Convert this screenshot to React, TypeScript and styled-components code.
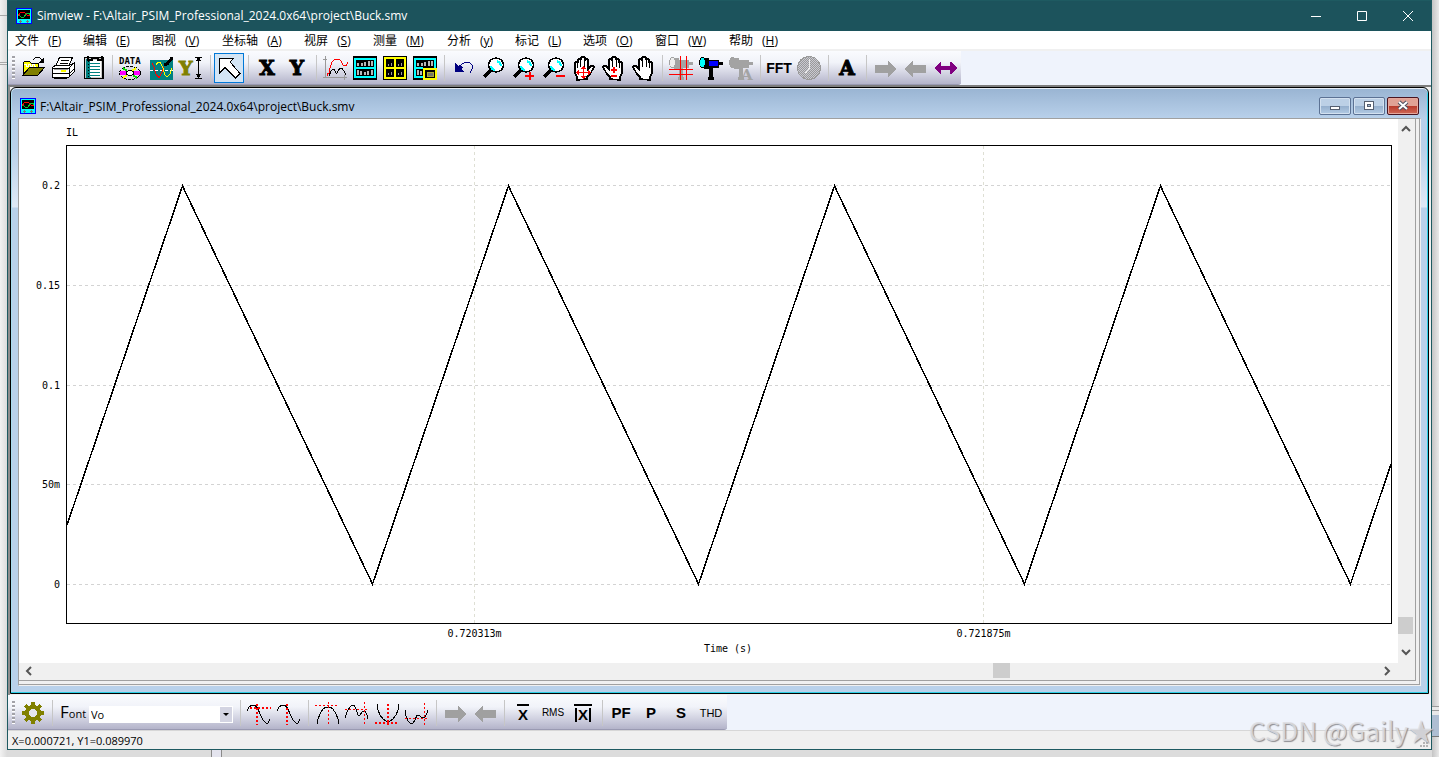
import React from "react";
import styled, { createGlobalStyle } from "styled-components";

const uiFont = `"Open Sans", "Noto Sans CJK SC", sans-serif`;
const monoFont = `"DejaVu Sans Mono", "Liberation Mono", monospace`;

const GlobalStyle = createGlobalStyle`
  * { box-sizing: border-box; }
  body { margin: 0; font-family: ${uiFont}; font-size: 12px; color: #000; }
  button { font: inherit; color: inherit; border: 0; padding: 0; margin: 0; background: none; }
`;

/* ---------- window shell ---------- */

const Desktop = styled.div`
  display: flex;
  min-height: 100vh;
  padding: 0 7px 7px;
  background:
    linear-gradient(90deg, #8a8a8a 0 1px, #e4e4ee 1px 10px, #8a8a8a 10px 11px, transparent 11px) 211px 100% / 12px 7px no-repeat,
    linear-gradient(#9a9a9a 0 1px, #e8e8e8 1px 4px, #9a9a9a 4px 5px, #e8e8e8 5px 9px, #aebed2 9px 30px, #777 30px 31px) 100% 706px / 7px 31px no-repeat,
    linear-gradient(#a8a8a8, #a8a8a8) 0 15px / 7px 1px no-repeat,
    linear-gradient(#a8a8a8 0 1px, #eee 1px 2px, #a8a8a8 2px) 0 62px / 7px 3px no-repeat,
    linear-gradient(90deg, #f2f2f2 0, #dcdcdc 7px, #dcdcdc calc(100% - 7px), #c4c4c4 calc(100% - 7px), #e9e9e9 100%);
`;

const Window = styled.div`
  position: relative;
  flex: 1;
  min-width: 0;
  display: flex;
  flex-direction: column;
  background: #f0f0f0;
  border: 1px solid #1e5a61;
`;

const TitleBar = styled.header`
  display: flex;
  align-items: center;
  height: 30px;
  padding-left: 8px;
  background: #1c535c;
  color: #fff;
`;

const TitleText = styled.h1`
  flex: 1;
  margin: 0 0 0 5px;
  font-size: 12px;
  font-weight: 400;
  line-height: 18px;
  white-space: nowrap;
`;

const CaptionButton = styled.button`
  display: grid;
  place-items: center;
  width: 46px;
  height: 30px;
`;

const MenuBar = styled.nav`
  display: flex;
  height: 20px;
  padding-left: 7px;
  background: #fff;
  border-bottom: 2px solid #f0f0f0;
`;

const MenuItem = styled.button<{ $width: number }>`
  display: flex;
  gap: 9px;
  width: ${(p) => p.$width}px;
  line-height: 20px;
  white-space: nowrap;
`;

/* ---------- toolbars ---------- */

const Dock = styled.div<{ $height: number }>`
  display: flex;
  height: ${(p) => p.$height}px;
  background: #eff3fc;
`;

const Toolbar = styled.div<{ $low?: boolean }>`
  display: flex;
  align-items: center;
  padding: ${(p) => (p.$low ? 2 : 0)}px 1px 0 0;
  border-bottom: 1px solid #9a9ab2;
  border-radius: 0 0 3px 0;
  background: linear-gradient(#fafbfe, #f1f3f9 35%, #d5d6e4 65%, #b4b4ca);
`;

const Grip = styled.div`
  width: 3px;
  height: 24px;
  margin: 0 3px 0 4px;
  background: repeating-linear-gradient(#a2a2a8 0 2px, #fff 2px 3px, transparent 3px 4px);
`;

const Separator = styled.div`
  width: 8px;
  height: 26px;
  background: linear-gradient(90deg, transparent 4px, #c6c6c6 4px 5px, transparent 5px);
`;

const ToolButton = styled.button<{ $active?: boolean }>`
  display: grid;
  place-items: center;
  width: 30px;
  height: 30px;
  border: 1px solid ${(p) => (p.$active ? "#0078d7" : "transparent")};
  background: ${(p) => (p.$active ? "#d3e5f5" : "none")};
`;

const Pixels = styled.svg`
  display: block;
  width: 24px;
  height: 24px;
  overflow: visible;
  shape-rendering: crispEdges;
`;

const Glyph = styled.span<{ $size: number; $light?: boolean }>`
  font-family: "Liberation Sans", sans-serif;
  font-size: ${(p) => p.$size}px;
  font-weight: ${(p) => (p.$light ? 400 : 700)};
  line-height: 24px;
`;

const SlabGlyph = styled.span`
  font: 700 20px/24px "DejaVu Serif", serif;
  -webkit-text-stroke: 1px #000;
`;

const MeanGlyph = styled.span<{ $bars?: boolean }>`
  padding: 0 1px;
  border: solid #000;
  border-width: 2px 0 0;
  font: 700 15px/14px "Liberation Sans", sans-serif;
  & > span {
    display: block;
    margin-top: 2px;
    padding: 0 ${(p) => (p.$bars ? 1 : 0)}px;
    border: solid #000;
    border-width: 0 ${(p) => (p.$bars ? 2 : 0)}px;
  }
`;

const FontLabel = styled.label`
  width: 33px;
  padding-left: 4px;
  font: 11px/24px "Open Sans", sans-serif;
  white-space: nowrap;
  & > span { font-size: 17px; }
`;

const SelectBox = styled.div`
  position: relative;
  width: 144px;
  height: 17px;
  margin: 2px 3px 0 0;
  background: #fff;
  & > svg {
    position: absolute;
    right: 1px;
    top: 1px;
    pointer-events: none;
  }
`;

const FontSelect = styled.select`
  appearance: none;
  display: block;
  width: 100%;
  height: 17px;
  padding: 0 2px;
  border: 0;
  background: transparent;
  font: 11px/17px ${uiFont};
  color: #000;
`;

/* ---------- document window ---------- */

const Client = styled.main`
  flex: 1;
  display: flex;
  min-height: 0;
  padding: 0 2px 1px 0;
  border: solid #8e8e8e;
  border-width: 2px 0 0 2px;
  border-top-color: #7d7d7d;
  background: #f0f0f0;
`;

const DocWindow = styled.section`
  flex: 1;
  min-width: 0;
  display: flex;
  flex-direction: column;
  padding: 0 7px 7px;
  border: 1px solid #000;
  border-radius: 6px 6px 0 0;
  background: linear-gradient(#99b4d2 0, #b8d0ea 30px, #b9d1ea 60px, #dfe9f6 119px, #b9d1ea 120px);
  box-shadow: inset 0 1px #e6eef8, inset -1px -1px #2ccfe6, inset 1px 0 #a8dcee;
`;

const DocTitle = styled.div`
  display: flex;
  align-items: center;
  height: 30px;
  padding: 6px 2px 0;
`;

const DocName = styled.h2`
  flex: 1;
  margin: 2px 0 0 4px;
  font-size: 12px;
  font-weight: 400;
  line-height: 18px;
  white-space: nowrap;
`;

const DocButton = styled.button<{ $close?: boolean }>`
  display: grid;
  place-items: center;
  width: 32px;
  height: 18px;
  margin-left: 2px;
  border: 1px solid ${(p) => (p.$close ? "#4a1420" : "#5c7294")};
  border-radius: 2px;
  box-shadow: inset 0 0 0 1px ${(p) => (p.$close ? "#e5a79c" : "#d3e1f0")};
  background: ${(p) =>
    p.$close
      ? "linear-gradient(#e0a195 0 48%, #b8382a 50%, #cf6a58)"
      : "linear-gradient(#bcd0e6 0 48%, #94afcd 50%, #b3cbe4)"};
`;

const Bevel = styled.div`
  flex: 1;
  display: flex;
  border: 1px solid #a0a0a0;
  border-right-color: #f0f0f0;
  border-bottom-color: #f0f0f0;
  background: #f0f0f0;
`;

const BevelInner = styled.div`
  flex: 1;
  display: flex;
  padding: 0 3px 3px 0;
  border: solid #a0a0a0;
  border-width: 0 1px 1px 0;
`;

const View = styled.div`
  flex: 1;
  display: grid;
  grid-template: minmax(0, 1fr) 17px / minmax(0, 1fr) 17px;
  border: solid #a0a0a0;
  border-width: 0 1px 1px 0;
`;

const ScrollTrack = styled.div<{ $vertical?: boolean }>`
  display: flex;
  flex-direction: ${(p) => (p.$vertical ? "column" : "row")};
  padding: ${(p) => (p.$vertical ? "1px 2px 3px 0" : "0 3px 2px 1px")};
  background: #f0f0f0;
`;

const ScrollButton = styled.button<{ $vertical?: boolean }>`
  display: grid;
  place-items: center;
  width: ${(p) => (p.$vertical ? 15 : 17)}px;
  height: ${(p) => (p.$vertical ? 17 : 15)}px;
`;

const ScrollSpace = styled.div<{ $grow: number }>`
  flex: ${(p) => p.$grow};
`;

const ScrollThumb = styled.div<{ $vertical?: boolean }>`
  width: ${(p) => (p.$vertical ? 15 : 17)}px;
  height: ${(p) => (p.$vertical ? 17 : 15)}px;
  background: #cdcdcd;
`;

const Chart = styled.figure`
  display: grid;
  grid-template: 26px minmax(420px, 1fr) 18px 21px / 47px minmax(0, 1fr) 6px;
  margin: 0;
  background: #fff;
  font: 10px/12px ${monoFont};
`;

const SeriesName = styled.div`
  grid-column: 2;
  padding-top: 8px;
`;

const YAxis = styled.div`
  grid-area: 2 / 1;
  display: flex;
  flex-direction: column;
  justify-content: space-between;
  padding: 35px 6px 33px 0;
  text-align: right;
`;

const Plot = styled.div`
  grid-area: 2 / 2;
  border: 1px solid #000;
  & > svg {
    display: block;
    width: 100%;
    height: 100%;
    shape-rendering: crispEdges;
  }
`;

const XAxis = styled.div`
  grid-area: 3 / 2;
  display: grid;
  grid-template-columns: 154fr 509fr 509fr 154fr;
  padding-top: 4px;
  text-align: center;
  & > :first-child { grid-column: 2; }
`;

const XTitle = styled.figcaption`
  grid-area: 4 / 2;
  padding: 1px 2px 0 0;
  text-align: center;
`;

const StatusBar = styled.footer`
  height: 19px;
  padding-left: 4px;
  border-top: 1px solid #d7d7d7;
  background: #f0f0f0;
  font-size: 11px;
  line-height: 19px;
`;

const SizeGrip = styled.svg`
  position: absolute;
  right: 2px;
  bottom: 1px;
`;

const Watermark = styled.div`
  position: absolute;
  right: -3px;
  bottom: 3px;
  display: flex;
  font: 26px/32px "Noto Sans CJK SC", sans-serif;
  color: rgba(222, 222, 226, 0.85);
  text-shadow: 1px 1px 1px rgba(110, 110, 115, 0.75);
  white-space: nowrap;
  pointer-events: none;
`;

/* ---------- drawings ---------- */

const AppIcon = () => (
  <svg width="16" height="16" viewBox="0 0 16 16" shapeRendering="crispEdges" aria-hidden="true">
    <rect width="16" height="16" fill="#00f" />
    <rect x="1" y="1" width="14" height="14" fill="#0ff" />
    <rect x="2" y="2" width="12" height="9" fill="#000" />
    <path d="M2 8l3-4h3l4 4 2-1" fill="none" stroke="#f00" />
    <path d="M3 7l2 2h3l3-4h2l1 2" fill="none" stroke="#0c3" />
    <path d="M3 13.500h3M4.500 12v3M10 13.500h3M11.500 12v3" stroke="#777" />
  </svg>
);

const OpenIcon = () => (
  <Pixels viewBox="0 0 24 24">
    <path d="M2 18V7l2-2h4l2 2h7v4" fill="#ff0" stroke="#000" />
    <path d="M3 8h2v2h2v-2h2v2h2v-2h2v2h2" fill="none" stroke="#fff" />
    <path d="M2 19l7-8h15l-7 8z" fill="#808000" stroke="#000" />
    <path d="M12 4q4-5 8-1l2 2" fill="none" stroke="#000" />
    <path d="M23 1v6h-6z" fill="#000" />
  </Pixels>
);

const PrintIcon = () => (
  <Pixels viewBox="0 0 24 24">
    <path d="M8.500 1.500h13l-4 9h-13z" fill="#fff" stroke="#000" />
    <path d="M10 4.500h8M9 7.500h8" stroke="#000" />
    <path d="M1 12l4-3h14l4-2v9l-5 5H1z" fill="#fff" stroke="#000" />
    <path d="M1 12.500h17M1 17.500h17M18.500 12v9M18 12l5-5M18 18l5-5M3 22.500h13" stroke="#000" fill="none" />
    <path d="M3 13.500h14" stroke="#999" />
    <rect x="10" y="14" width="5" height="2" fill="#ff0" />
  </Pixels>
);

const NotebookIcon = () => (
  <Pixels viewBox="0 0 24 24">
    <rect x="3" y="1" width="20" height="22" fill="#000" />
    <rect x="4" y="2" width="17" height="20" fill="#ccc" />
    <rect x="5" y="3" width="5" height="19" fill="#008080" />
    <rect x="9" y="4" width="11" height="17" fill="#fff" />
    <path d="M8 7.500h11M8 10.500h11M8 13.500h11M8 16.500h11M8 19.500h11" stroke="#008080" />
    <path d="M7 0v4h4V2h6v2h4V0" fill="none" stroke="#000" strokeWidth="2" />
    <path d="M7.500 5v17" stroke="#000" strokeDasharray="1 2" />
  </Pixels>
);

const DataIcon = () => (
  <Pixels viewBox="0 0 24 24">
    <text x="0" y="8" fontFamily="DejaVu Sans Mono" fontWeight="700" fontSize="9">
      DATA
    </text>
    <ellipse cx="11" cy="17" rx="10.500" ry="6.500" fill="#ddd" stroke="#000" strokeDasharray="3 1" />
    <path d="M1 15h6v4H1zM15 15h6v4h-6z" fill="#f0f" />
    <path d="M4 12l4 3M14 19l4 3" stroke="#0d0" strokeWidth="2" />
    <path d="M17 12l-4 3M8 19l-4 3" stroke="#ff0" strokeWidth="2" />
    <ellipse cx="11" cy="17" rx="3.500" ry="2.500" fill="#fff" stroke="#000" />
  </Pixels>
);

const WaveIcon = () => (
  <Pixels viewBox="0 0 24 24">
    <rect x="1" y="4" width="23" height="20" fill="#008080" />
    <path d="M1 14.500h23" stroke="#fff" strokeDasharray="3 2" />
    <path d="M3 7l2 4 2 7 3 4 3-6 2-5" fill="none" stroke="#f00" />
    <path d="M7 9l2-3h2l3 6 2 7 2 2 3-3 2-6" fill="none" stroke="#ff0" />
    <path d="M15 9l3-1 5-6" fill="none" stroke="#000" strokeWidth="3" />
    <path d="M21 1h3v3" fill="#000" />
  </Pixels>
);

const YScaleIcon = () => (
  <Pixels viewBox="0 0 24 24">
    <text x="0" y="19" fontFamily="DejaVu Serif" fontWeight="700" fontSize="19" fill="#808000" stroke="#808000">
      Y
    </text>
    <path d="M16 1.500h7M16 22.500h7M19.500 1v21" stroke="#000" />
    <path d="M19.500 1l3 4h-6zM19.500 22l3-4h-6z" fill="#000" />
  </Pixels>
);

const PointerIcon = () => (
  <Pixels viewBox="0 0 24 24">
    <path d="M2 2h15l-4 4 10 11.500-4.500 4.500L8 11.500 2.500 17z" fill="#fff" stroke="#000" />
  </Pixels>
);

const CurvesIcon = () => (
  <Pixels viewBox="0 0 24 24">
    <path d="M2 0v22M0 3h4M0 21.500h24M21 19v5" stroke="#999" />
    <path d="M4 20l1-3h1l1-5 2-6 3-3h4l2 2 2 4 3 1 2-4" fill="none" stroke="#f00" />
    <path d="M6 20l2-5 2-2h1l2 4h1l3-5h2l3 5 1 2" fill="none" stroke="#000" />
  </Pixels>
);

const Bars = ({ y, flip }: { y: number; flip?: boolean }) => (
  <path
    d={
      flip
        ? `M5 ${y}v5M8 ${y + 1}v4M12 ${y + 2}v3M15 ${y + 1}v4M19 ${y}v5`
        : `M5 ${y + 2}v3M9 ${y + 2}v3M12 ${y + 1}v4M16 ${y}v5M19 ${y}v5`
    }
    stroke="#b8b8b8"
    strokeWidth="2"
  />
);

const SplitIcon = () => (
  <Pixels viewBox="0 0 24 24">
    <rect width="24" height="24" />
    <rect x="2" y="3" width="20" height="18" fill="none" stroke="#0ff" strokeWidth="2" />
    <path d="M2 12h20" stroke="#0ff" strokeWidth="2" />
    <Bars y={5} />
    <Bars y={14} flip />
  </Pixels>
);

const QuadIcon = () => (
  <Pixels viewBox="0 0 24 24">
    <rect width="24" height="24" />
    <path d="M2 2h20v20H2zM12 2v20M2 12h20" fill="none" stroke="#ff0" strokeWidth="2" />
    <path d="M5.500 8v2M8.500 7v3M15.500 8v2M18.500 7v3M5.500 17v2M8.500 16v3M15.500 17v2M18.500 16v3" stroke="#999" />
  </Pixels>
);

const OverlayIcon = () => (
  <Pixels viewBox="0 0 24 24">
    <path d="M0 0h24v13H11v11H0z" />
    <path d="M22 12V3H2v18h9M2 12h8" fill="none" stroke="#0ff" strokeWidth="2" />
    <Bars y={5} />
    <path d="M5 14v5M8 15v4" stroke="#b8b8b8" strokeWidth="2" />
    <rect x="11" y="13" width="12" height="10" fill="#000" stroke="#ff0" strokeWidth="2" />
    <rect x="14.500" y="16.500" width="6" height="4" fill="#776" stroke="#aa3" />
  </Pixels>
);

const UndoIcon = () => (
  <Pixels viewBox="0 0 24 24">
    <path d="M8 12l3-4 4-2h3l3 3v4l-2 4" fill="none" stroke="#000080" />
    <path d="M4 7v9h9l-3-3 2-2-3-2-2 1z" fill="#000080" />
  </Pixels>
);

const Magnifier = ({ sign }: { sign?: "+" | "-" }) => (
  <Pixels viewBox="0 0 24 24">
    <path d="M10 14l-7 7" stroke="#000" strokeWidth="4" />
    <ellipse cx="15" cy="9" rx="7.500" ry="7" fill="#fff" stroke="#000" strokeWidth="1.500" />
    <path d="M10 10l1 3 3 1M16 5l3 2 1 3" fill="none" stroke="#0ff" strokeWidth="2" />
    {sign && <path d={sign === "+" ? "M14 20h9M18.500 16v8" : "M15 20h9"} stroke="#f00" strokeWidth="2" />}
  </Pixels>
);

const Hand = ({ mode }: { mode?: "move" | "vertical" }) => (
  <Pixels viewBox="0 0 24 24">
    <g transform={mode === "move" ? "matrix(-1 0 0 1 25 0)" : undefined} stroke="#000">
      <path
        d="M9 23v-2l-3-3-3-5-1-2 1-1h2l3 3V4l1-1h1l1 1V2l1-1h2l1 1v1h2l1 1v2h2l1 1v10l-2 4v3z"
        fill="#fff"
        strokeWidth="1.500"
      />
      <path d="M11.500 4v7M15.500 4v7M18.500 6v6" />
    </g>
    {mode === "move" && (
      <>
        <path d="M6 16.500h12M12.500 11v11" stroke="#f00" />
        <path d="M5 16.500l3-3v6zM20 16.500l-3-3v6zM12.500 10l-3 3h6zM12.500 23l-3-3h6z" fill="#f00" />
      </>
    )}
    {mode === "vertical" && <path d="M10 14h6M13 11v6M10 20h6" stroke="#f00" strokeWidth="2" />}
  </Pixels>
);

const Telescope = ({ kind }: { kind: "grid" | "color" | "text" }) => {
  const color = kind === "color";
  const body = color ? "#000" : "#a3a3a3";
  return (
    <Pixels viewBox="0 0 24 24">
      <path d="M5 2h5v2h10v2h4v3h-4v3H10v1H5z" fill={body} />
      <rect x="10" y="5" width="9" height="5" fill={color ? "#00f" : "#a3a3a3"} />
      <ellipse cx="3.500" cy="6.500" rx="3" ry="5" fill={color ? "#0ff" : kind === "grid" ? "#eee" : "#a3a3a3"} stroke={body} />
      <path d="M10 11h4v10h1v3H9v-3h1z" fill={body} />
      {kind === "grid" && <path d="M11.500 0v24M17.500 0v24M0 13.500h24M0 18.500h24" stroke="#f00" />}
      {kind === "text" && (
        <text x="12" y="24" fontFamily="DejaVu Serif" fontWeight="700" fontSize="15" fill="#a3a3a3">
          A
        </text>
      )}
    </Pixels>
  );
};

const ClockIcon = () => (
  <Pixels viewBox="0 0 24 24">
    <defs>
      <pattern id="dither" width="2" height="2" patternUnits="userSpaceOnUse">
        <rect width="2" height="2" fill="#c9c9d2" />
        <path d="M0 0h1v1H0zM1 1h1v1H1z" fill="#999" />
      </pattern>
    </defs>
    <circle cx="12" cy="12" r="11.500" fill="url(#dither)" stroke="#9a9a9a" />
    <path d="M12.500 3v9l-4 5" fill="none" stroke="#eee" />
  </Pixels>
);

const ArrowIcon = ({ left }: { left?: boolean }) => (
  <Pixels viewBox="0 0 24 24">
    <path
      transform={left ? "matrix(-1 0 0 1 25 0)" : undefined}
      d="M2 9h13V5h1l7 8-7 8h-1v-4H2z"
      fill="#a0a0a0"
    />
  </Pixels>
);

const SpanIcon = () => (
  <Pixels viewBox="0 0 24 24">
    <path d="M1 12l6-6h1v4h9V6h1l6 6-6 6h-1v-4H8v4H7z" fill="#800080" />
  </Pixels>
);

const GearIcon = () => (
  <Pixels viewBox="0 0 24 24">
    <g fill="#808000">
      {[0, 45, 90, 135].map((a) => (
        <rect key={a} x="10" y="1" width="4" height="22" transform={`rotate(${a} 12 12)`} />
      ))}
      <circle cx="12" cy="12" r="8" />
    </g>
    <circle cx="12" cy="12" r="4" fill="#e4e6f0" />
  </Pixels>
);

interface TraceProps {
  d: string;
  h?: string;
  v?: string;
  bold?: boolean;
}

const TraceIcon = ({ d, h, v, bold }: TraceProps) => (
  <Pixels viewBox="0 0 24 24">
    <path d={d} fill="none" stroke="#000" />
    {h && <path d={h} stroke="#f00" strokeWidth={bold ? 2 : 1} strokeDasharray="2 2" />}
    {v && <path d={v} stroke="#f00" strokeWidth={bold ? 2 : 1} strokeDasharray="2 2" />}
  </Pixels>
);

const sine = "M0 10l2-4 3-2h3l3 4 2 5 3 6 3 3h2l2-4";

const chevrons = {
  up: "M1 7l4-4 4 4",
  down: "M1 3l4 4 4-4",
  left: "M7 1L3 5l4 4",
  right: "M3 1l4 4-4 4",
};

const Chevron = ({ to }: { to: keyof typeof chevrons }) => (
  <svg width="10" height="10" viewBox="0 0 10 10" aria-hidden="true">
    <path d={chevrons[to]} fill="none" stroke="#555" strokeWidth="2" />
  </svg>
);

/* ---------- data ---------- */

const menus = [
  { name: "文件", mnemonic: "F", width: 68 },
  { name: "编辑", mnemonic: "E", width: 69 },
  { name: "图视", mnemonic: "V", width: 70 },
  { name: "坐标轴", mnemonic: "A", width: 82 },
  { name: "视屏", mnemonic: "S", width: 69 },
  { name: "测量", mnemonic: "M", width: 74 },
  { name: "分析", mnemonic: "y", width: 68 },
  { name: "标记", mnemonic: "L", width: 68 },
  { name: "选项", mnemonic: "O", width: 72 },
  { name: "窗口", mnemonic: "W", width: 74 },
  { name: "帮助", mnemonic: "H", width: 68 },
];

interface Tool {
  label: string;
  icon: React.ReactNode;
  active?: boolean;
}

const mainTools: Tool[][] = [
  [
    { label: "Open", icon: <OpenIcon /> },
    { label: "Print", icon: <PrintIcon /> },
    { label: "Copy to clipboard", icon: <NotebookIcon /> },
  ],
  [
    { label: "Reload data", icon: <DataIcon /> },
    { label: "Add curves", icon: <WaveIcon /> },
    { label: "Y scale", icon: <YScaleIcon /> },
  ],
  [{ label: "Select", icon: <PointerIcon />, active: true }],
  [
    { label: "X axis", icon: <SlabGlyph>X</SlabGlyph> },
    { label: "Y axis", icon: <SlabGlyph>Y</SlabGlyph> },
  ],
  [
    { label: "Curves", icon: <CurvesIcon /> },
    { label: "Add screen", icon: <SplitIcon /> },
    { label: "Tile screens", icon: <QuadIcon /> },
    { label: "Overlay screen", icon: <OverlayIcon /> },
  ],
  [
    { label: "Undo", icon: <UndoIcon /> },
    { label: "Zoom", icon: <Magnifier /> },
    { label: "Zoom in", icon: <Magnifier sign="+" /> },
    { label: "Zoom out", icon: <Magnifier sign="-" /> },
    { label: "Pan", icon: <Hand mode="move" /> },
    { label: "Pan vertically", icon: <Hand mode="vertical" /> },
    { label: "Drag", icon: <Hand /> },
  ],
  [
    { label: "Measure grid", icon: <Telescope kind="grid" /> },
    { label: "Measure", icon: <Telescope kind="color" /> },
    { label: "Measure label", icon: <Telescope kind="text" /> },
  ],
  [
    { label: "FFT", icon: <Glyph $size={14}>FFT</Glyph> },
    { label: "Time", icon: <ClockIcon /> },
  ],
  [{ label: "Text", icon: <SlabGlyph>A</SlabGlyph> }],
  [
    { label: "Next", icon: <ArrowIcon /> },
    { label: "Previous", icon: <ArrowIcon left /> },
    { label: "Full span", icon: <SpanIcon /> },
  ],
];

const measureTools: Tool[][] = [
  [
    { label: "Global maximum", icon: <TraceIcon d={sine} h="M3 7h21" v="M10 3v21" bold /> },
    { label: "Cursor", icon: <TraceIcon d={sine} v="M10 3v21" bold /> },
  ],
  [
    { label: "Maximum", icon: <TraceIcon d="M2 23l1-5 2-5 3-5 3-2h4l3 2 3 5 2 5 1 5" h="M0 4.500h24" v="M13.500 1v23" /> },
    { label: "Next maximum", icon: <TraceIcon d="M0 17l2-6 3-5 2-2h2l2 4 2 6h2l3-4h2l2 4 1 4" h="M0 8.500h24" v="M19.500 1v23" /> },
    { label: "Minimum", icon: <TraceIcon d="M2 3l1 6 2 5 3 4 3 2h4l3-2 3-4 2-5 1-6" h="M0 22h24" v="M13 3v21" bold /> },
    { label: "Next minimum", icon: <TraceIcon d="M0 9l1 6 2 5 2 2h3l2-3 2-5h2l3 3 3-1 2-4 1-3" h="M0 17.500h24" v="M19.500 2v22" /> },
  ],
  [
    { label: "Next point", icon: <ArrowIcon /> },
    { label: "Previous point", icon: <ArrowIcon left /> },
  ],
  [
    { label: "Average", icon: <MeanGlyph><span>X</span></MeanGlyph> },
    { label: "RMS", icon: <Glyph $size={10} $light>RMS</Glyph> },
    { label: "Average absolute", icon: <MeanGlyph $bars><span>X</span></MeanGlyph> },
  ],
  [
    { label: "Power factor", icon: <Glyph $size={15}>PF</Glyph> },
    { label: "Real power", icon: <Glyph $size={15}>P</Glyph> },
    { label: "Apparent power", icon: <Glyph $size={15}>S</Glyph> },
    { label: "THD", icon: <Glyph $size={11} $light>THD</Glyph> },
  ],
];

const yTicks = ["0.2", "0.15", "0.1", "50m", "0"];
const xTicks = ["0.720313m", "0.721875m"];
const gridRows = [39.5, 139.5, 239.5, 338.5, 438.5];
const gridColumns = [407.5, 916.5];
const inductorCurrent: [number, number][] = [
  [0, 379], [115.5, 40], [305.5, 438], [441.5, 40], [631.5, 438],
  [767.5, 40], [957.5, 438], [1093.5, 40], [1283.5, 438], [1324, 318],
];

const ToolGroups = ({ groups }: { groups: Tool[][] }) => (
  <>
    {groups.map((group, i) => (
      <React.Fragment key={i}>
        {i > 0 && <Separator />}
        {group.map((tool) => (
          <ToolButton key={tool.label} type="button" aria-label={tool.label} $active={tool.active}>
            {tool.icon}
          </ToolButton>
        ))}
      </React.Fragment>
    ))}
  </>
);

const path = "F:\\Altair_PSIM_Professional_2024.0x64\\project\\Buck.smv";

export default function App() {
  return (
    <>
      <GlobalStyle />
      <Desktop>
        <Window>
          <TitleBar>
            <AppIcon />
            <TitleText>Simview - {path}</TitleText>
            <CaptionButton type="button" aria-label="Minimize">
              <svg width="10" height="10"><path d="M0 5.500h10" stroke="#fff" /></svg>
            </CaptionButton>
            <CaptionButton type="button" aria-label="Maximize">
              <svg width="10" height="10"><path d="M.500.500h9v9h-9z" fill="none" stroke="#fff" /></svg>
            </CaptionButton>
            <CaptionButton type="button" aria-label="Close">
              <svg width="10" height="10"><path d="M0 0l10 10M10 0L0 10" stroke="#fff" /></svg>
            </CaptionButton>
          </TitleBar>

          <MenuBar>
            {menus.map((m) => (
              <MenuItem key={m.name} type="button" $width={m.width}>
                <span>{m.name}</span>
                <span>(<u>{m.mnemonic}</u>)</span>
              </MenuItem>
            ))}
          </MenuBar>

          <Dock $height={34}>
            <Toolbar role="toolbar" aria-label="Main">
              <Grip />
              <ToolGroups groups={mainTools} />
            </Toolbar>
          </Dock>

          <Client>
            <DocWindow>
              <DocTitle>
                <AppIcon />
                <DocName>{path}</DocName>
                <DocButton type="button" aria-label="Minimize document">
                  <svg width="12" height="12"><rect x="1.500" y="6.500" width="9" height="3" fill="#fff" stroke="#555f70" /></svg>
                </DocButton>
                <DocButton type="button" aria-label="Restore document">
                  <svg width="12" height="12">
                    <rect x="1.500" y="1.500" width="9" height="8" fill="#fff" stroke="#555f70" />
                    <rect x="4.500" y="4.500" width="3" height="2" fill="#a9bfd8" stroke="#555f70" />
                  </svg>
                </DocButton>
                <DocButton type="button" aria-label="Close document" $close>
                  <svg width="12" height="12">
                    <path d="M2 2l8 7M10 2L2 9" stroke="#4d4f60" strokeWidth="4" />
                    <path d="M2 2l8 7M10 2L2 9" stroke="#fff" strokeWidth="2" />
                  </svg>
                </DocButton>
              </DocTitle>

              <Bevel>
                <BevelInner>
                  <View>
                    <Chart>
                      <SeriesName>IL</SeriesName>
                      <YAxis>
                        {yTicks.map((t) => <span key={t}>{t}</span>)}
                      </YAxis>
                      <Plot>
                        <svg viewBox="0 0 1324 477" preserveAspectRatio="none" role="img" aria-label="IL over time">
                          {gridRows.map((y) => (
                            <path key={y} d={`M0 ${y}H1324`} stroke="#d3d3d3" strokeDasharray="3 3" vectorEffect="non-scaling-stroke" />
                          ))}
                          {gridColumns.map((x) => (
                            <path key={x} d={`M${x} 0V477`} stroke="#dedfd4" strokeDasharray="3 3" vectorEffect="non-scaling-stroke" />
                          ))}
                          <polyline
                            points={inductorCurrent.map((p) => p.join(",")).join(" ")}
                            fill="none"
                            stroke="#000"
                            strokeWidth="1.500"
                            vectorEffect="non-scaling-stroke"
                          />
                        </svg>
                      </Plot>
                      <XAxis>
                        {xTicks.map((t) => <span key={t}>{t}</span>)}
                      </XAxis>
                      <XTitle>Time (s)</XTitle>
                    </Chart>
                    <ScrollTrack $vertical>
                      <ScrollButton type="button" aria-label="Scroll up" $vertical><Chevron to="up" /></ScrollButton>
                      <ScrollSpace $grow={480} />
                      <ScrollThumb $vertical />
                      <ScrollSpace $grow={9} />
                      <ScrollButton type="button" aria-label="Scroll down" $vertical><Chevron to="down" /></ScrollButton>
                    </ScrollTrack>
                    <ScrollTrack>
                      <ScrollButton type="button" aria-label="Scroll left"><Chevron to="left" /></ScrollButton>
                      <ScrollSpace $grow={956} />
                      <ScrollThumb />
                      <ScrollSpace $grow={368} />
                      <ScrollButton type="button" aria-label="Scroll right"><Chevron to="right" /></ScrollButton>
                    </ScrollTrack>
                  </View>
                </BevelInner>
              </Bevel>
            </DocWindow>
          </Client>

          <Dock $height={35}>
            <Toolbar role="toolbar" aria-label="Measure" $low>
              <Grip />
              <ToolButton type="button" aria-label="Settings"><GearIcon /></ToolButton>
              <Separator />
              <FontLabel htmlFor="curve"><span>F</span>ont</FontLabel>
              <SelectBox>
                <FontSelect id="curve" defaultValue="Vo">
                  <option>Vo</option>
                  <option>IL</option>
                </FontSelect>
                <svg width="12" height="15" aria-hidden="true">
                  <rect width="12" height="15" fill="#d3d4e2" />
                  <path d="M3 6h6L6 9z" fill="#000" />
                </svg>
              </SelectBox>
              <Separator />
              <ToolGroups groups={measureTools} />
            </Toolbar>
          </Dock>

          <StatusBar>X=0.000721, Y1=0.089970</StatusBar>
          <SizeGrip width="9" height="9" aria-hidden="true">
            <path d="M6 0h2v2H6zM3 3h2v2H3zM6 3h2v2H6zM0 6h2v2H0zM3 6h2v2H3zM6 6h2v2H6z" fill="#b4b4b4" />
          </SizeGrip>
          <Watermark>CSDN @Gaily<span>★</span></Watermark>
        </Window>
      </Desktop>
    </>
  );
}
